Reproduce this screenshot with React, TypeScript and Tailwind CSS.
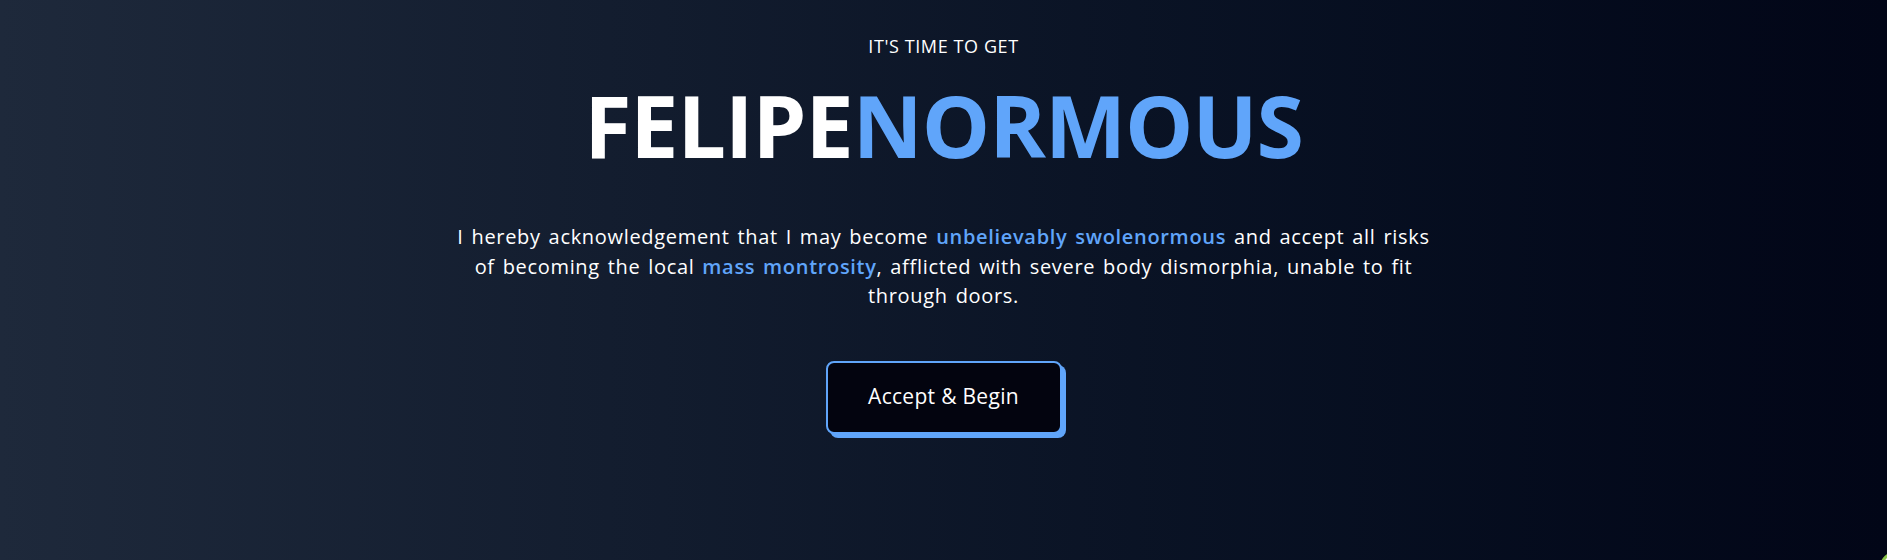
export default function App() {
  return (
    <div className="relative h-[560px] w-full overflow-hidden bg-gradient-to-r from-[#1e293b] to-[#020617] font-['Open_Sans',sans-serif] text-white">
      <div className="flex flex-col items-center pt-[32px]">
        <p className="text-[18px] leading-[28px] tracking-[0.6px]">IT'S TIME TO GET</p>

        <h1 className="mt-[15px] text-[86px] font-bold leading-[100px] tracking-[-1px]">
          FELIPE<span className="text-[#60a5fa]">NORMOUS</span>
        </h1>

        <p className="mt-[47px] text-center text-[20px] leading-[29.5px] tracking-[0.68px] [word-spacing:2px]">
          I hereby acknowledgement that I may become{' '}
          <span className="font-semibold text-[#60a5fa]">unbelievably swolenormous</span> and accept all risks
          <br />
          of becoming the local <span className="font-semibold text-[#60a5fa]">mass montrosity</span>, afflicted
          with severe body dismorphia, unable to fit
          <br />
          through doors.
        </p>

        <button className="mt-[50px] h-[73px] w-[236px] rounded-lg border-2 border-[#60a5fa] bg-[#03040f] text-[21px] tracking-[0.3px] shadow-[4px_4px_0_0_#60a5fa]">
          Accept &amp; Begin
        </button>
      </div>

      <div className="absolute -right-[32px] -bottom-[30px] h-[40px] w-[40px] rounded-full border-[3px] border-[#8bc34a] bg-white" />
    </div>
  )
}
